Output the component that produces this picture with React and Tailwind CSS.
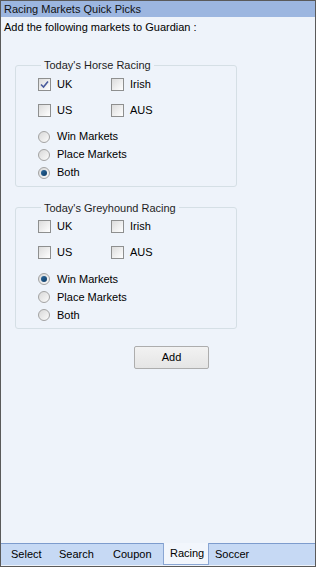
import React, { useState } from 'react';

const Checkbox = ({ label, checked }) => (
  <label className="flex items-center w-[73px] h-[13px]">
    <span className="w-[13px] h-[13px] border border-[#8e8f8f] bg-gradient-to-br from-[#dcdcdc] to-[#ffffff] flex items-center justify-center shrink-0">
      {checked && (
        <svg width="9" height="9" viewBox="0 0 9 9">
          <path d="M1 4.5 L3.5 7 L8 1.5" fill="none" stroke="#4a5b9c" strokeWidth="1.6" />
        </svg>
      )}
    </span>
    <span className="ml-[6px]">{label}</span>
  </label>
);

const Radio = ({ label, checked }) => (
  <label className="flex items-center h-[18px]">
    <span className="w-[12px] h-[12px] rounded-full border border-[#a3a3a3] bg-gradient-to-br from-[#d8d8d8] to-[#fbfbfb] flex items-center justify-center shrink-0">
      {checked && <span className="w-[6px] h-[6px] rounded-full bg-gradient-to-br from-[#2c6a9e] to-[#0f3c66]" />}
    </span>
    <span className="ml-[7px]">{label}</span>
  </label>
);

const GroupBox = ({ title, checked, radio }) => (
  <fieldset className="ml-[11px] w-[222px] border border-[#d5dfe5] rounded-[3px] pl-[22px] pb-[4px] pt-[4px]">
    <legend className="ml-[3px] px-[3px] text-[#1e1e1e]">{title}</legend>
    <div className="flex flex-col gap-[13px]">
      <div className="flex">
        <Checkbox label="UK" checked={checked.includes('UK')} />
        <Checkbox label="Irish" checked={checked.includes('Irish')} />
      </div>
      <div className="flex">
        <Checkbox label="US" checked={checked.includes('US')} />
        <Checkbox label="AUS" checked={checked.includes('AUS')} />
      </div>
    </div>
    <div className="flex flex-col mt-[11px]">
      {['Win Markets', 'Place Markets', 'Both'].map((r) => (
        <Radio key={r} label={r} checked={r === radio} />
      ))}
    </div>
  </fieldset>
);

export default function App() {
  const [tab] = useState('Racing');
  const tabs = [
    { name: 'Select', w: 'w-[48px]' },
    { name: 'Search', w: 'w-[54px]' },
    { name: 'Coupon', w: 'w-[56px]' },
    { name: 'Racing', w: 'w-[46px]' },
    { name: 'Soccer', w: 'w-[52px]' },
  ];

  return (
    <div
      className="w-[316px] h-[567px] flex flex-col bg-[#eef3fa] border border-[#5a5a5a] text-[11px] text-black"
      style={{ fontFamily: '"Liberation Sans", Arial, sans-serif' }}
    >
      <div className="h-[16px] bg-[#9cb6e0] px-[3px] leading-[16px] text-[#111]">Racing Markets Quick Picks</div>
      <div className="flex-1 flex flex-col px-[3px]">
        <div className="mt-[4px] leading-[13px]">Add the following markets to Guardian :</div>
        <div className="mt-[23px]">
          <GroupBox title="Today's Horse Racing" checked={['UK']} radio="Both" />
        </div>
        <div className="mt-[13px]">
          <GroupBox title="Today's Greyhound Racing" checked={[]} radio="Win Markets" />
        </div>
        <div className="mt-[17px] ml-[130px]">
          <button className="w-[75px] h-[23px] border border-[#adadad] bg-gradient-to-b from-[#f2f2f2] to-[#e5e5e5] rounded-[2px]">
            Add
          </button>
        </div>
      </div>
      <div className="h-[22px] flex items-stretch bg-[#c6d9f4] border-t border-[#7d9ccd] mb-[1px] pl-[4px]">
        {tabs.map((t) => (
          <div
            key={t.name}
            className={`${t.w} flex items-center pl-[6px] ${
              tab === t.name ? 'bg-[#f2f6fc] border-x border-b border-[#8aa6d3] -mt-[1px] pl-[5px]' : ''
            }`}
          >
            {t.name}
          </div>
        ))}
      </div>
    </div>
  );
}
